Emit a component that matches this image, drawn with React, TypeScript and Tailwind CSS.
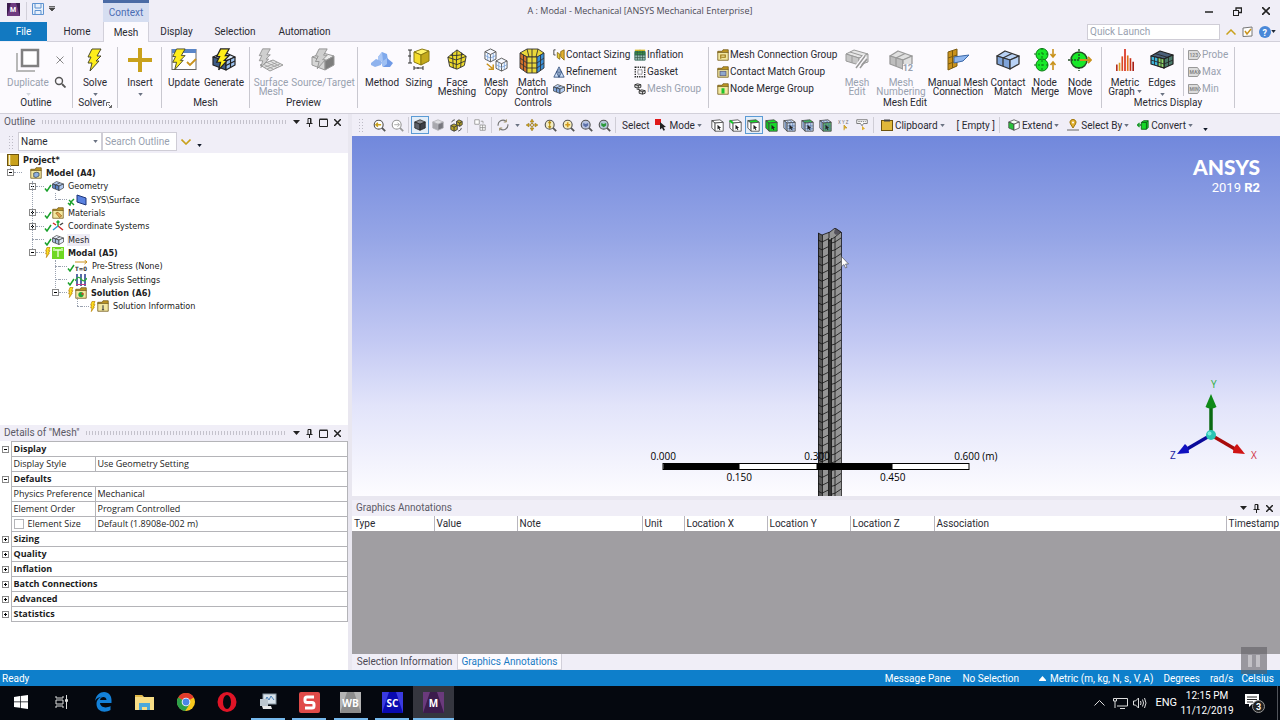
// App.tsx
import type { ReactNode } from 'react';

interface IconProps {
  className?: string;
}

const BOLT = '9,1 18,1 14,8 18,8 13,13 16,13 7,23 9,15 5,15 8,9 5,9';

/* ---------- shared shapes ---------- */

function Caret({ className = 'text-gray-500' }: IconProps) {
  return (
    <svg viewBox="0 0 6 4" className={`w-[5px] h-[3px] shrink-0 ${className}`}>
      <path d="M0 0h6L3 4z" fill="currentColor" />
    </svg>
  );
}

function Bolt({ className = 'w-6 h-6' }: IconProps) {
  return (
    <svg viewBox="0 0 24 24" className={className}>
      <polygon points={BOLT} fill="#ffee1a" stroke="#4a4a2c" strokeWidth="1" />
    </svg>
  );
}

interface CubeProps extends IconProps {
  top?: string;
  left?: string;
  right?: string;
  stroke?: string;
}

function Cube({ className = 'w-3 h-3', top = '#fff', left = '#fff', right = '#fff', stroke = '#444' }: CubeProps) {
  return (
    <svg viewBox="0 0 16 16" className={className}>
      <g stroke={stroke} strokeWidth="1" strokeLinejoin="round">
        <polygon points="1,4 8,1 15,4 8,7" fill={top} />
        <polygon points="1,4 8,7 8,15 1,12" fill={left} />
        <polygon points="15,4 8,7 8,15 15,12" fill={right} />
      </g>
    </svg>
  );
}

// Box seen from the front with a pointer on it, for the selection filters
function PickBox({ top = '#fff', side = '#fff', front = '#fff', corner, grid }: { top?: string; side?: string; front?: string; corner?: boolean; grid?: boolean }) {
  return (
    <svg viewBox="0 0 16 16" className="w-[13px] h-[13px]">
      <g stroke="#444" strokeLinejoin="round">
        <polygon points="1,2 11,1 15,4 5,5" fill={top} />
        <polygon points="1,2 5,5 5,15 1,11" fill={side} />
        <polygon points="5,5 15,4 15,15 5,15" fill={front} />
      </g>
      {grid && <path d="M8.500 5v10M12 4.500V15M5 8.500h10M5 12h10M3 3.500v9M4 1.800L8 4.800M8 1.500L12 4.500" fill="none" stroke="#4a6ca0" strokeWidth=".8" />}
      {corner && <path d="M1 2l4 3" stroke="#17c829" strokeWidth="2.500" />}
      <path d="M8 7l4.500 4-2 .200 1 2-1 .500-1-2L8 13z" fill="#222" />
    </svg>
  );
}

// Two cubes side by side, used for bodies and mesh parts
function Bricks({ className = 'w-6 h-6', a = '#b9d2f5', b = '#7fa3d8', stroke = '#333' }: IconProps & { a?: string; b?: string; stroke?: string }) {
  return (
    <svg viewBox="0 0 24 24" className={className}>
      <g stroke={stroke} strokeWidth="1.3" strokeLinejoin="round">
        <polygon points="1,8 9,3 23,8 14,12" fill={a} />
        <polygon points="1,8 14,12 14,21 1,16" fill={b} />
        <polygon points="23,8 14,12 14,21 23,16" fill={a} />
        <path d="M7 10v8M16 5.500L7 10" fill="none" />
      </g>
    </svg>
  );
}

function Folder({ className = 'w-3 h-3', children }: IconProps & { children?: ReactNode }) {
  return (
    <svg viewBox="0 0 16 16" className={className}>
      <path d="M1 3h6l1-2h7v4H1z" fill="#c39b25" stroke="#6d5410" />
      <path d="M1 4.500h14V15H1z" fill="#f2e7a0" stroke="#6d5410" />
      {children}
    </svg>
  );
}

function Magnifier({ fill = '#fff', stroke = '#555', children }: { fill?: string; stroke?: string; children?: ReactNode }) {
  return (
    <svg viewBox="0 0 16 16" className="w-[13px] h-[13px]">
      <circle cx="7" cy="7" r="5.500" fill={fill} stroke={stroke} strokeWidth="1.400" />
      <path d="M11 11l4 4" stroke={stroke} strokeWidth="2.200" />
      {children}
    </svg>
  );
}

/* ---------- ribbon icons ---------- */

function DuplicateIcon() {
  return (
    <svg viewBox="0 0 24 24" className="w-6 h-6" fill="none">
      <path d="M1 5v18h18" stroke="#b8b8b8" strokeWidth="2" />
      <rect x="6" y="2" width="16" height="16" fill="#fff" stroke="#808080" strokeWidth="2.500" />
    </svg>
  );
}

function InsertIcon() {
  return (
    <svg viewBox="0 0 24 24" className="w-6 h-6">
      <path d="M12 0v24M0 12h24" stroke="#c9a11c" strokeWidth="4" />
    </svg>
  );
}

function UpdateIcon() {
  return (
    <svg viewBox="0 0 26 24" className="w-[26px] h-6">
      <rect x="1" y="1.500" width="24" height="20" fill="#fff" stroke="#666" />
      <rect x="1" y="1" width="24" height="4" fill="#5a86c8" />
      <path d="M16 14l3 3 6-6" fill="none" stroke="#c9921c" strokeWidth="1.800" />
      <polygon points={BOLT} fill="#ffee1a" stroke="#4a4a2c" transform="translate(-3 0) scale(.95)" />
    </svg>
  );
}

function GenerateIcon() {
  return (
    <svg viewBox="0 0 24 24" className="w-6 h-6">
      <g stroke="#222" strokeWidth="1.200" strokeLinejoin="round">
        <polygon points="1,9 12,4 23,9 14,13" fill="#dce9fb" />
        <polygon points="1,9 14,13 14,22 1,17" fill="#3e5c86" />
        <polygon points="23,9 14,13 14,22 23,17" fill="#9cc2ef" />
        <path d="M18.500 11v9M14 17.500l9-4.500" />
      </g>
      <polygon points={BOLT} fill="#ffee1a" stroke="#222" strokeWidth="1.300" transform="scale(.95)" />
    </svg>
  );
}

function SurfaceMeshIcon() {
  return (
    <svg viewBox="0 0 26 24" className="w-[26px] h-6">
      <polygon points="2,17 15,12 25,17 12,23" fill="#e4e4e4" stroke="#999" />
      <path d="M5 16l10 5M9 14.500l10 5M12 13l9 5M6 19.500l13-5M9 21l13-5" stroke="#999" strokeWidth=".8" />
      <polygon points={BOLT} fill="#cfcfcf" stroke="#8f8f8f" transform="translate(-3 0) scale(.85)" />
    </svg>
  );
}

function SourceTargetIcon() {
  return (
    <svg viewBox="0 0 24 24" className="w-6 h-6" stroke="#999">
      <polygon points="1,9 12,5 23,8 14,13" fill="#ececec" />
      <polygon points="1,9 14,13 14,22 1,17" fill="#d6d6d6" />
      <polygon points="23,8 14,13 14,22 23,17" fill="#7d7d7d" />
      <polygon points={BOLT} fill="#cfcfcf" stroke="#8f8f8f" transform="scale(.9)" />
    </svg>
  );
}

function MethodIcon() {
  return (
    <svg viewBox="0 0 24 24" className="w-6 h-6">
      <polygon points="8,9 12,4 17,6 18,13 8,13" fill="#7fa9ec" />
      <polygon points="8,9 12,4 13,13 8,13" fill="#a9c6f5" />
      <polygon points="1,15 6,11 11,13 11,17 5,19 1,17" fill="#8fb3ee" />
      <polygon points="11,14 17,10 23,15 20,19 13,19" fill="#6f9ae6" />
      <polygon points="11,14 17,10 17,16 13,19" fill="#9fc0f4" />
    </svg>
  );
}

function SizingIcon() {
  return (
    <svg viewBox="0 0 24 24" className="w-6 h-6">
      <g stroke="#8a7a12" strokeLinejoin="round">
        <polygon points="7,4 15,1 22,3 14,7" fill="#fff36b" />
        <polygon points="7,4 14,7 14,17 7,14" fill="#f4dc2c" />
        <polygon points="22,3 14,7 14,17 22,13" fill="#c4a91c" />
      </g>
      <path d="M1 2h4M1 15h4M3 2v13M1 8h3M7 18v4M16 18v4M7 20h9M11 19v2" stroke="#333" fill="none" />
    </svg>
  );
}

function FaceMeshingIcon() {
  return (
    <svg viewBox="0 0 24 24" className="w-[22px] h-[22px] mt-px">
      <polygon points="12,1 22,8 20,18 12,22 4,19 2,9" fill="#ecd92a" stroke="#333" />
      <path d="M12 1l-1 21M2 9l9 3 11-4M3 14l9 3 9-4M7 4l1 17M17 4l-1 16M5 7l7 0 7-1" fill="none" stroke="#333" />
    </svg>
  );
}

function MeshCopyIcon() {
  return (
    <svg viewBox="0 0 26 26" className="w-[26px] h-6">
      <g fill="#f4f8ff" stroke="#555" strokeLinejoin="round">
        <path d="M1 4l6-3 6 3v8l-6 3-6-3zM1 4l6 3 6-3M7 7v8" />
        <path d="M13 14l6-3 6 3v8l-6 3-6-3zM13 14l6 3 6-3M19 17v8" />
      </g>
      <path d="M1 8l6 3 6-3M4 5.500v8M10 5.500v8M13 18l6 3 6-3M16 15.500v8M22 15.500v8" fill="none" stroke="#6f9ad6" strokeWidth=".8" />
      <path d="M3 17l6 5M10 18v5H5" fill="none" stroke="#c9921c" strokeWidth="1.600" />
    </svg>
  );
}

function MatchControlIcon() {
  return (
    <svg viewBox="0 0 26 26" className="w-[26px] h-[26px]">
      <g stroke="#333" strokeWidth=".9">
        <path d="M1 5L8 1h11l6 4-6 4H8z" fill="#e9d83a" />
        <path d="M1 5l7 4v16l-7-5z" fill="#d0702a" />
        <path d="M8 9h10v16H8z" fill="#e9d83a" />
        <path d="M25 5l-7 4v16l7-5z" fill="#3a8fd8" />
        <path d="M1 10l7 5h10l7-5M1 15l7 5h10l7-5M4.500 7v15.500M21.500 7v15.500M13 9v16M8 1l2 8M19 1l-2 8M13 1v8" fill="none" />
      </g>
    </svg>
  );
}

function MeshNumberingIcon() {
  return (
    <div className="relative">
      <Bricks a="#e0e0e0" b="#bdbdbd" stroke="#999" />
      <span className="absolute right-0 bottom-0 text-[9px] leading-[8px] font-bold text-gray-400 bg-[#fcfafe]">12</span>
    </div>
  );
}

function MeshEditIcon() {
  return (
    <svg viewBox="0 0 24 24" className="w-6 h-6">
      <g stroke="#999" strokeLinejoin="round">
        <polygon points="1,6 9,2 23,6 14,10" fill="#e6e6e6" />
        <polygon points="1,6 14,10 14,17 1,13" fill="#c6c6c6" />
        <polygon points="23,6 14,10 14,17 23,14" fill="#ddd" />
        <path d="M7 8v7M5 4l13 4v8" fill="none" />
      </g>
      <path d="M11 20L20 8" stroke="#fcfafe" strokeWidth="4" />
      <path d="M11 20L20 8M15 20l7-9" stroke="#999" strokeWidth="1.500" />
    </svg>
  );
}

function ManualMeshIcon() {
  return (
    <svg viewBox="0 0 24 24" className="w-6 h-6">
      <polygon points="2,4 11,1 11,18 2,22" fill="#c9921c" stroke="#7a5a10" />
      <path d="M2 10l9-3M2 16l9-3M6.500 3v17" stroke="#7a5a10" />
      <polygon points="8,9 23,7 17,13 8,15" fill="#8fb6ee" stroke="#3b68a8" />
    </svg>
  );
}

function NodeMergeIcon() {
  return (
    <svg viewBox="0 0 24 24" className="w-6 h-6">
      <circle cx="9" cy="6.500" r="6" fill="#17e829" stroke="#0b7a14" />
      <circle cx="9" cy="17" r="6" fill="#17e829" stroke="#0b7a14" />
      <path d="M1 6h16M1 17h16M9 0v24" stroke="#0b7a14" strokeDasharray="2 2" />
      <path d="M20 1v8M17.500 6l2.500 3 2.500-3M20 22v-8M17.500 17l2.500-3 2.500 3" fill="none" stroke="#c9921c" strokeWidth="1.600" />
    </svg>
  );
}

function NodeMoveIcon() {
  return (
    <svg viewBox="0 0 24 24" className="w-6 h-6">
      <circle cx="11" cy="12" r="8" fill="#17e829" stroke="#224d24" strokeWidth="1.500" />
      <path d="M0 12h11M11 1v4M11 19v4M11 6v6" stroke="#224d24" strokeWidth="1.400" strokeDasharray="2 1" />
      <path d="M12 12h11M20 9l3 3-3 3" fill="none" stroke="#c9921c" strokeWidth="1.800" />
    </svg>
  );
}

function MetricGraphIcon() {
  return (
    <svg viewBox="0 0 22 26" className="w-5 h-6" strokeWidth="1.800">
      <path d="M2 25v-7" stroke="#b53020" />
      <path d="M5 25v-9" stroke="#d8a020" />
      <path d="M8 25V9" stroke="#d84a20" />
      <path d="M11 25V1" stroke="#d82a18" />
      <path d="M14 25V8" stroke="#e07018" />
      <path d="M17 25V11" stroke="#c83018" />
      <path d="M20 25v-10" stroke="#a82018" />
    </svg>
  );
}

function EdgesIcon() {
  return (
    <svg viewBox="0 0 24 24" className="w-6 h-6">
      <g stroke="#222" strokeWidth="1.200" strokeLinejoin="round">
        <polygon points="1,8 10,3 23,7 14,11" fill="#4a5f78" />
        <polygon points="1,8 14,11 14,20 1,16" fill="#3fb4d8" />
        <polygon points="23,7 14,11 14,20 23,16" fill="#4a7a6a" />
        <polygon points="8,9.500 14,11 14,20 8,18" fill="#8fd86a" />
        <path d="M4.500 9v8M11 10v9M18.500 9v9M1 12l13 4 9-4M5 5.500l13 4" fill="none" strokeWidth=".8" />
      </g>
    </svg>
  );
}

function ContactSizingIcon() {
  return (
    <svg viewBox="0 0 14 14" className="w-3 h-3">
      <path d="M3 1H1v6h2" fill="none" stroke="#333" />
      <polygon points="5,4 8,6 8,12 5,10" fill="#e6cf3a" stroke="#8a6a10" />
      <polygon points="9,3 13,1 13,13 9,9" fill="#e0b030" stroke="#8a6a10" />
    </svg>
  );
}

function RefinementIcon() {
  return (
    <svg viewBox="0 0 14 14" className="w-3 h-3" fill="#cfe0f8" stroke="#34507c">
      <path d="M7 1l6 12H1zM4 7h6l-3 6zM7 7v6M4 7l3-3 3 3" />
    </svg>
  );
}

function InflationIcon() {
  return (
    <svg viewBox="0 0 14 14" className="w-3 h-3">
      <path d="M1 3q6-3 12 0v4H1z" fill="#3c9a48" stroke="#265" />
      <path d="M1 7h12v6H1z" fill="#9cc0b8" stroke="#365" />
      <path d="M1 5q6-3 12 0M4 2v11M7 2v11M10 2v11M1 10h12" fill="none" stroke="#354" strokeWidth=".8" />
      <path d="M1 1.500h12" stroke="#d8b820" strokeWidth="1.500" />
    </svg>
  );
}

function GasketIcon() {
  return (
    <svg viewBox="0 0 14 14" className="w-3 h-3" fill="none" stroke="#222">
      <rect x="1.500" y="1.500" width="11" height="11" strokeWidth="1.600" strokeDasharray="1.500 1.200" />
      <rect x="4.500" y="4.500" width="5" height="5" strokeDasharray="1 1" />
    </svg>
  );
}

function MeshGroupIcon() {
  return (
    <svg viewBox="0 0 14 14" className="w-3 h-3" fill="#ddd" stroke="#222">
      <path d="M1 2l3-1 4 1v3L5 6 1 5zM1 2l4 1 3-1M5 3v3" />
      <path d="M6 9l3-1 4 1v3l-3 1-4-1zM6 9l4 1 3-1M10 10v3M3 7l4 1" />
    </svg>
  );
}

function TagIcon({ text }: { text: string }) {
  return (
    <svg viewBox="0 0 13 10" className="w-[13px] h-[10px]">
      <path d="M.500 .500h9l3 4.500-3 4.500h-9z" fill="#dcdcdc" stroke="#999" />
      <text x="1.500" y="7" fontSize="5" fontWeight="700" fill="#888">{text}</text>
    </svg>
  );
}

/* ---------- ribbon building blocks ---------- */

interface BigButtonProps {
  width: string;
  icon: ReactNode;
  lines: string[];
  disabled?: boolean;
  caret?: boolean;
}

function BigButton({ width, icon, lines, disabled, caret }: BigButtonProps) {
  return (
    <button
      type="button"
      disabled={disabled}
      className={`${width} shrink-0 flex flex-col items-center text-[10px] leading-[9px] whitespace-nowrap ${disabled ? 'text-gray-400' : 'text-[#2a2a32]'}`}
    >
      <span className="h-[30px] flex items-start justify-center">{icon}</span>
      {lines.map((line, i) => (
        <span key={line} className="flex items-center gap-0.5">
          {line}
          {caret && lines.length > 1 && i === lines.length - 1 && <Caret />}
        </span>
      ))}
      {caret && lines.length === 1 && <Caret className={disabled ? 'mt-1.5 text-gray-300' : 'mt-1.5 text-gray-500'} />}
    </button>
  );
}

interface SmallItem {
  icon: ReactNode;
  label: string;
  disabled?: boolean;
}

function SmallColumn({ width, items }: { width: string; items: SmallItem[] }) {
  return (
    <div className={`${width} shrink-0 flex flex-col gap-1`}>
      {items.map((item) => (
        <button
          key={item.label}
          type="button"
          disabled={item.disabled}
          className={`h-[13px] flex items-center gap-px text-[10px] leading-[13px] whitespace-nowrap ${item.disabled ? 'text-gray-400' : 'text-[#2a2a32]'}`}
        >
          {item.icon}
          {item.label}
        </button>
      ))}
    </div>
  );
}

function Group({ width, label, pad = '', children, launcher }: { width: string; label?: string; pad?: string; children: ReactNode; launcher?: boolean }) {
  return (
    <section className={`${width} shrink-0 h-[61px] flex flex-col justify-between border-r border-[#c9c8d0]`}>
      <div className={`flex pt-px ${pad}`}>{children}</div>
      <div className="h-[11px] flex items-center justify-center text-[10px] leading-[11px] text-[#2a2a32]">
        {label}
        {launcher && (
          <svg viewBox="0 0 6 6" className="w-[6px] h-[6px] mt-1 shrink-0">
            <path d="M.5 4V.500H4M2.500 2.500l3 3M5.500 3v2.500H3" fill="none" stroke="#666" />
          </svg>
        )}
      </div>
    </section>
  );
}

function Ribbon() {
  return (
    <div className="h-[72px] flex pt-[5px] bg-[#fcfafe] border-b border-[#d2d0da] overflow-hidden">
      <Group width="w-[73px]" label="Outline" pad="px-1">
        <BigButton width="w-12" icon={<DuplicateIcon />} lines={['Duplicate']} disabled caret />
        <div className="w-4 flex flex-col items-center gap-3 pt-2">
          <button type="button" disabled aria-label="Delete">
            <svg viewBox="0 0 8 8" className="w-2 h-2"><path d="M.5 .5l7 7M7.500 .5l-7 7" stroke="#888" /></svg>
          </button>
          <button type="button" aria-label="Find">
            <svg viewBox="0 0 12 12" className="w-3 h-3" fill="none" stroke="#555">
              <circle cx="5" cy="5" r="3.500" strokeWidth="1.400" />
              <path d="M8 8l3.500 3.500" strokeWidth="1.800" />
            </svg>
          </button>
        </div>
      </Group>
      <Group width="w-[45px]" label="Solver" launcher>
        <BigButton width="w-11" icon={<Bolt />} lines={['Solve']} caret />
      </Group>
      <Group width="w-11">
        <BigButton width="w-11" icon={<InsertIcon />} lines={['Insert']} caret />
      </Group>
      <Group width="w-[88px]" label="Mesh" pad="pl-0.5">
        <BigButton width="w-10" icon={<UpdateIcon />} lines={['Update']} />
        <BigButton width="w-10" icon={<GenerateIcon />} lines={['Generate']} />
      </Group>
      <Group width="w-[108px]" label="Preview" pad="pl-0.5">
        <BigButton width="w-[38px]" icon={<SurfaceMeshIcon />} lines={['Surface', 'Mesh']} disabled />
        <BigButton width="w-[66px]" icon={<SourceTargetIcon />} lines={['Source/Target']} disabled />
      </Group>
      <Group width="w-[351px]" label="Controls" pad="pl-1">
        <BigButton width="w-10" icon={<MethodIcon />} lines={['Method']} />
        <BigButton width="w-[34px]" icon={<SizingIcon />} lines={['Sizing']} />
        <BigButton width="w-[42px]" icon={<FaceMeshingIcon />} lines={['Face', 'Meshing']} />
        <BigButton width="w-9" icon={<MeshCopyIcon />} lines={['Mesh', 'Copy']} />
        <BigButton width="w-9" icon={<MatchControlIcon />} lines={['Match', 'Control']} />
        <span className="w-[3px]" />
        <SmallColumn
          width="w-[81px]"
          items={[
            { icon: <ContactSizingIcon />, label: 'Contact Sizing' },
            { icon: <RefinementIcon />, label: 'Refinement' },
            { icon: <Bricks className="w-3 h-3" />, label: 'Pinch' },
          ]}
        />
        <SmallColumn
          width="w-[72px]"
          items={[
            { icon: <InflationIcon />, label: 'Inflation' },
            { icon: <GasketIcon />, label: 'Gasket' },
            { icon: <MeshGroupIcon />, label: 'Mesh Group', disabled: true },
          ]}
        />
      </Group>
      <Group width="w-[393px]" label="Mesh Edit" pad="pl-2">
        <SmallColumn
          width="w-[122px]"
          items={[
            { icon: <Folder><path d="M5 13V8h6v3H6" fill="none" stroke="#9a7510" strokeWidth="1.500" /></Folder>, label: 'Mesh Connection Group' },
            { icon: <Folder><rect x="4" y="7" width="8" height="6" fill="#8fa8cc" stroke="#557" /></Folder>, label: 'Contact Match Group' },
            { icon: <Folder><rect x="6" y="7" width="4" height="7" fill="#1fc42e" /></Folder>, label: 'Node Merge Group' },
          ]}
        />
        <BigButton width="w-9" icon={<MeshEditIcon />} lines={['Mesh', 'Edit']} disabled />
        <BigButton width="w-[52px]" icon={<MeshNumberingIcon />} lines={['Mesh', 'Numbering']} disabled />
        <BigButton width="w-[62px]" icon={<ManualMeshIcon />} lines={['Manual Mesh', 'Connection']} />
        <BigButton width="w-[38px]" icon={<Bricks />} lines={['Contact', 'Match']} />
        <BigButton width="w-9" icon={<NodeMergeIcon />} lines={['Node', 'Merge']} />
        <BigButton width="w-[34px]" icon={<NodeMoveIcon />} lines={['Node', 'Move']} />
      </Group>
      <Group width="w-[133px]" label="Metrics Display" pad="pl-1">
        <BigButton width="w-[38px]" icon={<MetricGraphIcon />} lines={['Metric', 'Graph']} caret />
        <BigButton width="w-9" icon={<EdgesIcon />} lines={['Edges']} caret />
        <div className="ml-[3px] pl-1 border-l border-[#c9c8d0]">
          <SmallColumn
            width="w-11"
            items={[
              { icon: <TagIcon text="123" />, label: 'Probe', disabled: true },
              { icon: <TagIcon text="MAX" />, label: 'Max', disabled: true },
              { icon: <TagIcon text="MIN" />, label: 'Min', disabled: true },
            ]}
          />
        </div>
      </Group>
    </div>
  );
}

/* ---------- title and tabs ---------- */

function TitleBar() {
  return (
    <header className="h-[22px] grid grid-cols-[1fr_auto_1fr] items-center bg-[#f0eef7]">
      <div className="flex items-center h-[22px]">
        <svg viewBox="0 0 13 13" className="w-[13px] h-[13px] ml-[7px] mb-1">
          <rect width="13" height="13" fill="#3d1d4f" />
          <path d="M4 0h5l4 13H0z" fill="#6d3a80" />
          <text x="3" y="9" fontSize="7" fontWeight="700" fill="#fff">M</text>
        </svg>
        <span className="w-px h-[18px] ml-1.5 bg-[#d2d0da]" />
        <button type="button" aria-label="Save" className="ml-[5px] mb-1">
          <svg viewBox="0 0 12 12" className="w-3 h-3" fill="#e8f0fb" stroke="#5f93d0">
            <path d="M.5 .5h11v11H.5zM3 .500h6v4.500H3zM3 7.500h6v4H3z" />
          </svg>
        </button>
        <svg viewBox="0 0 6 6" className="w-[6px] h-[6px] ml-[5px] mb-1"><path d="M0 .500h6M0 2h6L3 5z" fill="#444" stroke="#444" strokeWidth=".8" /></svg>
        <div className="w-[46px] h-[22px] ml-12 flex items-center justify-center border-t-[3px] border-[#4a6ba5] bg-[#d6def1] text-[10px] text-[#4a6cb3]">
          Context
        </div>
      </div>
      <h1 className="font-['Open_Sans',sans-serif] text-[9px] text-[#4c4a55]">A : Modal - Mechanical [ANSYS Mechanical Enterprise]</h1>
      <div className="flex items-center justify-end gap-5 pr-2.5 text-[#222]">
        <button type="button" aria-label="Minimize">
          <svg viewBox="0 0 8 8" className="w-2 h-2"><path d="M0 5h8" stroke="currentColor" strokeWidth="1.500" /></svg>
        </button>
        <button type="button" aria-label="Restore">
          <svg viewBox="0 0 9 9" className="w-[9px] h-[9px]" fill="none" stroke="currentColor">
            <path d="M3 3V1h5.500v4.500H6" strokeWidth="1.300" />
            <rect x=".5" y="3.500" width="5" height="5" />
          </svg>
        </button>
        <button type="button" aria-label="Close">
          <svg viewBox="0 0 8 8" className="w-2 h-2"><path d="M0 0l8 8M8 0L0 8" stroke="currentColor" strokeWidth="1.600" /></svg>
        </button>
      </div>
    </header>
  );
}

function TabStrip() {
  return (
    <nav className="h-5 flex bg-[#f0eef7] text-[10px] text-[#2a2a32]">
      <button type="button" className="w-[47px] h-[19px] bg-[#1279c1] text-white">File</button>
      <div className="flex-1 flex border-b border-[#d2d0da]">
        <button type="button" className="w-14 pl-1">Home</button>
        <button type="button" className="w-[46px] h-5 shrink-0 bg-[#fcfafe] border-x border-[#d2d0da]">Mesh</button>
        <button type="button" className="w-[55px]">Display</button>
        <button type="button" className="w-[62px]">Selection</button>
        <button type="button" className="w-[77px]">Automation</button>
        <div className="flex-1 flex items-center justify-end gap-1.5 pr-1">
          <input
            aria-label="Quick Launch"
            placeholder="Quick Launch"
            className="w-[133px] h-4 px-0.5 bg-white border border-[#cfcdd6] placeholder-gray-400"
          />
          <svg viewBox="0 0 10 6" className="w-[10px] h-[6px]"><path d="M.5 5.500L5 1l4.500 4.500" fill="none" stroke="#c9a11c" strokeWidth="1.500" /></svg>
          <svg viewBox="0 0 11 11" className="w-[11px] h-[11px]">
            <path d="M1 2l9-1v9l-9 .500z" fill="#fff" stroke="#777" />
            <path d="M3 5l2 3 4-5" fill="none" stroke="#c9921c" strokeWidth="1.500" />
          </svg>
          <button type="button" aria-label="Help" className="flex items-center">
            <svg viewBox="0 0 12 12" className="w-3 h-3">
              <circle cx="6" cy="6" r="6" fill="#4a88d8" />
              <text x="3.500" y="9.500" fontSize="9" fontWeight="700" fill="#fff">?</text>
            </svg>
            <Caret className="text-gray-800" />
          </button>
        </div>
      </div>
    </nav>
  );
}

/* ---------- docked panel header ---------- */

function PanelHeader({ title, maximize = true, dots = true }: { title: string; maximize?: boolean; dots?: boolean }) {
  return (
    <div className="h-4 shrink-0 flex items-center gap-1.5 pl-1 pr-[7px] bg-[#f0eef7] text-[10px] leading-[14px] text-[#5c5a66]">
      <h2>{title}</h2>
      {dots ? (
        <span className="flex-1 h-1 bg-[radial-gradient(#c4c2cc_1px,transparent_1px)] bg-[size:3px_2px]" />
      ) : (
        <span className="flex-1" />
      )}
      <button type="button" aria-label="Panel menu">
        <svg viewBox="0 0 7 4" className="w-[7px] h-1"><path d="M0 0h7L3.500 4z" fill="#222" /></svg>
      </button>
      <button type="button" aria-label="Pin">
        <svg viewBox="0 0 7 9" className="w-[7px] h-[9px]" fill="none" stroke="#222"><path d="M2 5V.500h3V5M.5 5.500h6M3.500 5.500V9M4.500 1v4" /></svg>
      </button>
      {maximize && (
        <button type="button" aria-label="Maximize">
          <svg viewBox="0 0 9 9" className="w-[9px] h-[9px]" fill="none" stroke="#222"><path d="M.5 1.500h8v7h-8zM.5 1h8" /></svg>
        </button>
      )}
      <button type="button" aria-label="Close panel">
        <svg viewBox="0 0 7 7" className="w-[7px] h-[7px]"><path d="M0 0l7 7M7 0L0 7" stroke="#222" strokeWidth="1.500" /></svg>
      </button>
    </div>
  );
}

function Grip() {
  return <span className="w-[5px] h-3.5 shrink-0 bg-[radial-gradient(#bdbbc6_1px,transparent_1px)] bg-[size:3px_3px]" />;
}

/* ---------- outline tree ---------- */

function Toggle({ open }: { open: boolean }) {
  return (
    <svg viewBox="0 0 7 7" className="w-[7px] h-[7px] shrink-0">
      <rect x=".5" y=".5" width="6" height="6" fill="#fff" stroke="#888" />
      <path d={open ? 'M2 3.500h3' : 'M2 3.500h3M3.500 2v3'} stroke="#000" />
    </svg>
  );
}

function StateMark({ kind }: { kind: string }) {
  if (kind === 'bolt') {
    return (
      <svg viewBox="0 0 24 24" className="w-2 h-[11px] shrink-0" preserveAspectRatio="none">
        <polygon points={BOLT} fill="#ffe11a" stroke="#c08a10" strokeWidth="2" />
      </svg>
    );
  }
  if (kind === 'cross') {
    return (
      <svg viewBox="0 0 8 8" className="w-2 h-2 mt-1 shrink-0"><path d="M1 5l2 2 1-3 3-3M2 2l5 5" fill="none" stroke="#19a02a" strokeWidth="1.400" /></svg>
    );
  }
  return (
    <svg viewBox="0 0 8 8" className="w-2 h-2 mt-1 shrink-0"><path d="M1 4.500l2 2.500 4-6" fill="none" stroke="#19a02a" strokeWidth="1.500" /></svg>
  );
}

const treeIcons: Record<string, ReactNode> = {
  project: (
    <svg viewBox="0 0 12 12" className="w-3 h-3"><rect x=".5" y=".5" width="11" height="11" fill="#c9a11c" stroke="#6d5410" /><path d="M2.500 1v10" stroke="#fbf4d0" strokeWidth="1.500" /></svg>
  ),
  model: <Folder><path d="M5 8l4-1 3 1v4l-4 2-3-1z" fill="#8fb0e0" stroke="#345" /></Folder>,
  geometry: <Bricks className="w-3 h-3" a="#b0c8ee" b="#5d85c4" />,
  surface: (
    <svg viewBox="0 0 12 12" className="w-3 h-3"><polygon points="2,1 11,4 11,11 2,8" fill="#5a82e0" stroke="#1c3478" /></svg>
  ),
  materials: <Folder><path d="M5 8l3-1 5 5-3 2z" fill="#e6a85a" stroke="#946014" /></Folder>,
  coords: (
    <svg viewBox="0 0 12 12" className="w-3 h-3" strokeWidth="1.500">
      <path d="M6 6V1M4.500 2.500L6 1l1.500 1.500" fill="none" stroke="#1fae35" />
      <path d="M6 6l5 4M1 3l3 2" stroke="#d02a2a" />
      <path d="M6 6l-5 4" stroke="#2a9ad0" />
      <path d="M8 5l3-2" stroke="#444" />
    </svg>
  ),
  mesh: <Bricks className="w-3 h-3" a="#e4ecf8" b="#a8bede" />,
  modal: (
    <svg viewBox="0 0 12 12" className="w-3 h-3"><rect width="12" height="12" fill="#6fd820" /><path d="M3 3h6M6 3v7M2 1v3M10 1v3" stroke="#eaffd8" strokeWidth="1.300" /></svg>
  ),
  prestress: (
    <svg viewBox="0 0 13 12" className="w-[13px] h-3"><path d="M0 2h12M9.500 0L12 2 9.500 4" fill="none" stroke="#c9921c" /><text x="0" y="11" fontSize="6" fontWeight="700" fill="#333">T=0</text></svg>
  ),
  settings: (
    <svg viewBox="0 0 12 12" className="w-3 h-3" fill="none"><path d="M2 0v12M6 0v12M10 0v12" stroke="#223a8a" strokeWidth="1.500" /><path d="M0 7q3-6 6-2t6-1" stroke="#2aae3a" strokeWidth="1.300" /><path d="M1 10.500h10" stroke="#c03a8a" /></svg>
  ),
  solution: <Folder><circle cx="8" cy="10" r="3.500" fill="#1fa83a" /><circle cx="10" cy="9" r="1.500" fill="#d8402a" /></Folder>,
  info: <Folder><path d="M8 7v6M6.500 13h3" stroke="#444" strokeWidth="1.500" /></Folder>,
};

interface TreeNode {
  label: string;
  icon: string;
  indent: string;
  toggle?: boolean;
  mark?: string;
  bold?: boolean;
  selected?: boolean;
  lead?: boolean;
}

const treeNodes: TreeNode[] = [
  { label: 'Project*', icon: 'project', indent: 'pl-[7px]', bold: true },
  { label: 'Model (A4)', icon: 'model', indent: 'pl-[7px]', toggle: true, bold: true },
  { label: 'Geometry', icon: 'geometry', indent: 'pl-[29px]', toggle: true, mark: 'check' },
  { label: 'SYS\\Surface', icon: 'surface', indent: 'pl-[52px]', mark: 'cross', lead: true },
  { label: 'Materials', icon: 'materials', indent: 'pl-[29px]', toggle: false, mark: 'check' },
  { label: 'Coordinate Systems', icon: 'coords', indent: 'pl-[29px]', toggle: false, mark: 'check' },
  { label: 'Mesh', icon: 'mesh', indent: 'pl-[29px]', mark: 'check', selected: true, lead: true },
  { label: 'Modal (A5)', icon: 'modal', indent: 'pl-[29px]', toggle: true, mark: 'bolt', bold: true },
  { label: 'Pre-Stress (None)', icon: 'prestress', indent: 'pl-[52px]', mark: 'check', lead: true },
  { label: 'Analysis Settings', icon: 'settings', indent: 'pl-[52px]', mark: 'check', lead: true },
  { label: 'Solution (A6)', icon: 'solution', indent: 'pl-[52px]', toggle: true, mark: 'bolt', bold: true },
  { label: 'Solution Information', icon: 'info', indent: 'pl-[74px]', mark: 'bolt', lead: true },
];

function OutlinePanel() {
  return (
    <section className="flex-1 min-h-0 flex flex-col bg-white">
      <PanelHeader title="Outline" />
      <div className="h-[23px] shrink-0 flex items-center pl-2 bg-[#f0eef7] text-[10px]">
        <Grip />
        <div className="relative ml-[5px]">
          <select aria-label="Filter by" className="w-[84px] h-[19px] pl-0.5 appearance-none bg-white border border-[#cfcdd6] text-[#2a2a32]">
            <option>Name</option>
          </select>
          <span className="absolute right-1 top-2"><Caret /></span>
        </div>
        <input
          aria-label="Search Outline"
          placeholder="Search Outline"
          className="w-[75px] h-[19px] px-0.5 bg-white border border-[#cfcdd6] placeholder-gray-400"
        />
        <svg viewBox="0 0 10 6" className="w-[10px] h-[6px] ml-1"><path d="M.5 .5L5 5l4.500-4.500" fill="none" stroke="#c9a11c" strokeWidth="1.600" /></svg>
        <Caret className="ml-1.5 mt-2 text-gray-900" />
      </div>
      <ul className="relative h-40 grid auto-rows-fr font-['DejaVu_Sans_Condensed','DejaVu_Sans',sans-serif] text-[9px] text-[#222]">
        {/* vertical connectors */}
        <li aria-hidden="true" className="absolute left-[10px] top-3 h-1 border-l border-dotted border-gray-400" />
        <li aria-hidden="true" className="absolute left-[32px] top-7 h-[68px] border-l border-dotted border-gray-400" />
        <li aria-hidden="true" className="absolute left-[55px] top-10 h-[7px] border-l border-dotted border-gray-400" />
        <li aria-hidden="true" className="absolute left-[55px] top-[107px] h-7 border-l border-dotted border-gray-400" />
        <li aria-hidden="true" className="absolute left-[77px] top-36 h-[9px] border-l border-dotted border-gray-400" />
        {treeNodes.map((node) => (
          <li key={node.label} className={`flex items-center ${node.indent}`}>
            {node.toggle !== undefined && <Toggle open={node.toggle} />}
            {node.lead && <span className="w-[7px] flex justify-end"><span className="w-1 border-t border-dotted border-gray-400" /></span>}
            {node.icon !== 'project' && <span className="w-2 border-t border-dotted border-gray-400" />}
            {node.mark && <StateMark kind={node.mark} />}
            <span className={`flex ${node.icon === 'model' ? 'ml-2' : ''}`}>{treeIcons[node.icon]}</span>
            <button
              type="button"
              className={`ml-[3px] px-px leading-[12px] whitespace-nowrap ${node.bold ? 'font-bold' : ''} ${node.selected ? 'bg-[#eeecf4]' : ''}`}
            >
              {node.label}
            </button>
          </li>
        ))}
      </ul>
    </section>
  );
}

/* ---------- details table ---------- */

interface DetailRow {
  name: string;
  value?: string;
  open?: boolean;
  check?: boolean;
}

const detailRows: DetailRow[] = [
  { name: 'Display', open: true },
  { name: 'Display Style', value: 'Use Geometry Setting' },
  { name: 'Defaults', open: true },
  { name: 'Physics Preference', value: 'Mechanical' },
  { name: 'Element Order', value: 'Program Controlled' },
  { name: 'Element Size', value: 'Default (1.8908e-002 m)', check: true },
  { name: 'Sizing', open: false },
  { name: 'Quality', open: false },
  { name: 'Inflation', open: false },
  { name: 'Batch Connections', open: false },
  { name: 'Advanced', open: false },
  { name: 'Statistics', open: false },
];

function DetailsPanel() {
  return (
    <section className="h-[245px] shrink-0 bg-white">
      <PanelHeader title={'Details of "Mesh"'} />
      <table className="w-full table-fixed border-collapse font-['Open_Sans',sans-serif] text-[9px] leading-[14px] text-[#1c1c22]">
        <colgroup>
          <col className="w-[11px]" />
          <col className="w-[84px]" />
          <col />
        </colgroup>
        <tbody>
          {detailRows.map((row) => (
            <tr key={row.name} className="h-[15px]">
              <td className="p-0 border-r border-[#b4b4b8]">
                {row.open !== undefined && <span className="flex pl-0.5"><Toggle open={row.open} /></span>}
              </td>
              {row.value ? (
                <>
                  <td className="p-0 pl-0.5 border border-[#b4b4b8] whitespace-nowrap">
                    {row.check ? (
                      <label className="flex items-center gap-1">
                        <input type="checkbox" className="w-[10px] h-[10px] appearance-none bg-white border border-[#b4b4b8]" />
                        {row.name}
                      </label>
                    ) : row.name}
                  </td>
                  <td className="p-0 pl-0.5 border border-[#b4b4b8]">{row.value}</td>
                </>
              ) : (
                <th colSpan={2} scope="rowgroup" className="p-0 pl-0.5 text-left font-bold border border-[#b4b4b8]">{row.name}</th>
              )}
            </tr>
          ))}
        </tbody>
      </table>
    </section>
  );
}

/* ---------- graphics toolbar ---------- */

function Tool({ label, active, children }: { label: string; active?: boolean; children: ReactNode }) {
  return (
    <button
      type="button"
      aria-label={label}
      className={`w-[18px] h-[18px] shrink-0 flex items-center justify-center border ${active ? 'border-[#5b9bd5] bg-[#e3edf8]' : 'border-transparent'}`}
    >
      {children}
    </button>
  );
}

function Divider() {
  return <span className="w-px h-4 mx-0.5 shrink-0 bg-[#cfcdd6]" />;
}

function TextTool({ icon, label }: { icon?: ReactNode; label: string }) {
  return (
    <button type="button" className="shrink-0 flex items-center gap-0.5 whitespace-nowrap">
      {icon}
      {label}
      <Caret />
    </button>
  );
}

function GraphicsToolbar() {
  return (
    <div className="h-[22px] shrink-0 flex items-center pl-1.5 bg-[#f0eef7] text-[10px] text-[#2a2a32] overflow-hidden">
      <Grip />
      <span className="w-[7px]" />
      <Tool label="Zoom back"><Magnifier><path d="M10 7H4M6 4.500L3.500 7 6 9.500" fill="none" stroke="#c9a11c" strokeWidth="1.800" /></Magnifier></Tool>
      <Tool label="Zoom forward"><Magnifier stroke="#999"><path d="M4 7h6M8 4.500L10.500 7 8 9.500" fill="none" stroke="#aaa" strokeWidth="1.200" /></Magnifier></Tool>
      <Divider />
      <Tool label="Shaded with edges" active><Cube top="#8a8d94" left="#5c6068" right="#3d4048" stroke="#222" /></Tool>
      <Tool label="Shaded"><Cube top="#dedee2" left="#a8a8ae" right="#77777e" stroke="#b0b0b6" /></Tool>
      <Tool label="Display parts">
        <svg viewBox="0 0 16 16" className="w-[13px] h-[13px]" stroke="#333">
          <path d="M1 8l4-2 4 2v5l-4 2-4-2z" fill="#b8a52a" />
          <path d="M8 3l3-2 4 2v4l-3 2-4-2z" fill="#b8a52a" />
          <path d="M1 8l4 2 4-2M5 10v5M8 3l4 2 3-2M12 5v4M2 4q1-3 4-3M14 11q0 3-4 4" fill="none" />
        </svg>
      </Tool>
      <Divider />
      <span className="w-px" />
      <Tool label="Exploded view">
        <svg viewBox="0 0 16 16" className="w-3 h-3" fill="#fff" stroke="#888">
          <path d="M1 1h6v6H1zM8 8h7v7H8zM8 11.500h7M11.500 8v7M9 3h3v3" />
        </svg>
      </Tool>
      <Divider />
      <Tool label="Rotate">
        <svg viewBox="0 0 16 16" className="w-3 h-3" fill="none" stroke="#777" strokeWidth="1.500">
          <path d="M1.500 9A6.500 6.500 0 0 1 12 3M14.500 7A6.500 6.500 0 0 1 4 13" />
          <path d="M12.500 .500V4H9M3.500 15.500V12H7" stroke="#9a8a5a" strokeWidth="1.200" />
        </svg>
      </Tool>
      <span className="w-[11px] flex justify-center"><Caret /></span>
      <Tool label="Pan">
        <svg viewBox="0 0 16 16" className="w-3 h-3" fill="#d0a41c" stroke="#7a5a10" strokeWidth=".5">
          <path d="M8 0l2.500 4h-5zM8 16l2.500-4h-5zM0 8l4-2.500v5zM16 8l-4-2.500v5z" />
          <path d="M7 5h2v1.500H7zM7 9.500h2V11H7zM5 7h1.500v2H5zM9.500 7H11v2H9.500z" />
        </svg>
      </Tool>
      <Tool label="Zoom"><Magnifier fill="#f4ecc0"><path d="M7 3v8M5.500 5L7 3l1.500 2M5.500 9L7 11l1.500-2" fill="none" stroke="#b08a10" strokeWidth="1.300" /></Magnifier></Tool>
      <Tool label="Box zoom"><Magnifier fill="#f8edb8"><path d="M7 4v6M4 7h6" stroke="#d09a1c" strokeWidth="2" /></Magnifier></Tool>
      <Tool label="Fit"><Magnifier fill="#b8c4e0"><path d="M4 5l3 1 3-1v3L7 10 4 8z" fill="#5a6fa8" /></Magnifier></Tool>
      <Tool label="Magnify"><Magnifier fill="#b4c8d8"><path d="M4 5l3 1 3-1v3L7 10 4 8z" fill="#2a9a3a" /></Magnifier></Tool>
      <Divider />
      <span className="ml-1 shrink-0">Select</span>
      <span className="w-1.5" />
      <TextTool
        icon={<svg viewBox="0 0 12 12" className="w-3 h-3"><rect width="6" height="6" fill="#e01818" /><path d="M5 3l6 5-2.500.300L10 11l-1.500.800L7 9 5 10.500z" fill="#222" /></svg>}
        label="Mode"
      />
      <span className="w-[7px]" />
      <Tool label="Vertex"><PickBox /></Tool>
      <Tool label="Edge"><PickBox corner /></Tool>
      <Tool label="Face" active><PickBox top="#17d829" /></Tool>
      <Tool label="Body"><PickBox top="#17e829" side="#14c224" front="#17d829" /></Tool>
      <Tool label="Node"><PickBox top="#dce6f6" side="#c4d4ec" front="#c4d4ec" grid /></Tool>
      <Tool label="Element face"><PickBox top="#3ac04a" side="#c4d4ec" front="#c4d4ec" grid /></Tool>
      <Tool label="Element"><PickBox top="#c4d4ec" side="#c4d4ec" front="#5ab06a" grid /></Tool>
      <Tool label="Coordinate">
        <svg viewBox="0 0 16 16" className="w-3 h-3"><text x="0" y="6" fontSize="6" fill="#777">X Y Z</text><path d="M8 15V8l4 4H9.500" fill="#e0b030" stroke="#c09820" /></svg>
      </Tool>
      <Tool label="Label">
        <svg viewBox="0 0 16 16" className="w-3 h-3"><path d="M1 1h14v5H10L8 9 6 6H1z" fill="#fff" stroke="#555" /><path d="M3 3.500h10" stroke="#555" strokeDasharray="2 1" /><path d="M8 15V9l4 4z" fill="#e0b030" /></svg>
      </Tool>
      <Divider />
      <span className="w-[5px]" />
      <TextTool
        icon={<svg viewBox="0 0 12 12" className="w-3 h-3"><rect x=".5" y="1.500" width="11" height="10" fill="#e0b83a" stroke="#6d5410" /><path d="M3 1.500h6" stroke="#444" strokeWidth="2" /></svg>}
        label="Clipboard"
      />
      <span className="ml-3 mr-0.5 shrink-0">[ Empty ]</span>
      <Divider />
      <span className="w-1.5" />
      <TextTool icon={<Cube left="#2ac43a" top="#f4fff4" />} label="Extend" />
      <span className="w-2" />
      <TextTool
        icon={<svg viewBox="0 0 12 12" className="w-3 h-3"><path d="M0 11h12" stroke="#666" /><path d="M6 9L3.500 5a3 3 0 1 1 5 0z" fill="#e0b030" stroke="#a07810" /><circle cx="6" cy="3.500" r="1" fill="#fff" /></svg>}
        label="Select By"
      />
      <span className="w-2" />
      <TextTool
        icon={<svg viewBox="0 0 14 12" className="w-3 h-3"><path d="M0 6h5M3 3.500L.500 6 3 8.500" fill="none" stroke="#1a9a2a" strokeWidth="1.500" /><path d="M5 3l3-2h5v8l-2 2H5z" fill="#17d829" stroke="#0b5a14" /><path d="M5 3h6v8M11 3l2-2" fill="none" stroke="#0b5a14" /></svg>}
        label="Convert"
      />
      <Caret className="ml-2.5 mt-2 text-gray-900" />
    </div>
  );
}

/* ---------- viewport ---------- */

const beamSteps = Array.from({ length: 34 }, (_, i) => i);

function Beam() {
  return (
    <svg viewBox="0 0 24 268" className="absolute left-1/2 bottom-0 ml-0.5 w-6 h-[268px]">
      <polygon points="0,5 4,7 12,4 17,0 23,4 23,268 0,268" fill="#959595" />
      <polygon points="0,5 4,7 4,268 0,268" fill="#585858" />
      <polygon points="17,0 23,4 18,7 16,5" fill="#55525c" />
      <polygon points="10.500,11 13.500,12 13.500,268 10.500,268" fill="#333" />
      <g stroke="#111" strokeWidth=".8" fill="none">
        {beamSteps.map((i) => (
          <path key={i} d={`M0 ${12 + i * 7.85}l4 2 6-3M13.500 ${15 + i * 7.85}l3.500-1 6-4`} />
        ))}
        <path d="M.500 5v263M4.500 7v261M10.500 10v258M13.500 10v258M17 9v259M23.500 4v264M0 5l4 2 8-3 5-4 6 4-6 5-6 4M11 4v6" />
      </g>
    </svg>
  );
}

function ScaleBar() {
  return (
    <div className="absolute left-1/2 bottom-[13px] w-[307px] -translate-x-1/2 font-['Open_Sans',sans-serif] text-[10px] leading-[12px] text-black">
      <div className="flex justify-between -mx-3">
        <span>0.000</span>
        <span className="ml-1">0.300</span>
        <span className="-mr-4">0.600 (m)</span>
      </div>
      <div className="h-[7px] mt-px flex border border-black bg-white">
        <span className="flex-1 bg-black" />
        <span className="flex-1" />
        <span className="flex-1 bg-black" />
        <span className="flex-1" />
      </div>
      <div className="flex justify-around mt-px">
        <span>0.150</span>
        <span>0.450</span>
      </div>
    </div>
  );
}

function Triad() {
  return (
    <svg viewBox="0 0 92 86" className="absolute right-[19px] bottom-[34px] w-[92px] h-[86px] font-['Open_Sans',sans-serif] text-[10px]">
      <path d="M42 59V28" stroke="#0b6a12" strokeWidth="3.500" />
      <path d="M42 18l5.500 13q-5.500 3-11 0z" fill="#0f8a18" />
      <path d="M42 59L18 73" stroke="#0a0a9a" strokeWidth="3.500" />
      <path d="M8 78l8-10q4 3 4 9z" fill="#1010c0" />
      <path d="M42 59l24 14" stroke="#a80c0c" strokeWidth="3.500" />
      <path d="M76 78l-12-1q0-6 4-9z" fill="#d01414" />
      <circle cx="42" cy="59" r="5" fill="#2ac4b4" />
      <circle cx="40.500" cy="57.500" r="2" fill="#7aeadc" />
      <text x="42" y="12" fill="#2aae3a">Y</text>
      <text x="1" y="83" fill="#1c1ca0">Z</text>
      <text x="82" y="83" fill="#d03040">X</text>
    </svg>
  );
}

function Viewport() {
  return (
    <div className="relative flex-1 min-h-0 overflow-hidden bg-[linear-gradient(to_bottom,#7188dc_0%,#95a5e6_28%,#c3c9f3_57%,#e2e4fa_75%,#fdfcff_100%)]">
      <div className="absolute right-5 top-[18px] flex flex-col items-end text-white">
        <p className="font-['Lato',sans-serif] text-[21px] leading-[26px] font-black">ANSYS</p>
        <p className="text-[13px] leading-[16px]">2019 <b>R2</b></p>
      </div>
      <Beam />
      <ScaleBar />
      <svg viewBox="0 0 8 13" className="absolute left-1/2 top-[120px] ml-[25px] w-2 h-[13px]">
        <path d="M.500 .500v10L3 8.500 4.500 12l1.500-.700L4.500 8h3z" fill="#fff" stroke="#444" strokeWidth=".6" />
      </svg>
      <Triad />
    </div>
  );
}

/* ---------- annotations ---------- */

const annotationColumns = [
  { name: 'Type', width: 'w-[82px]' },
  { name: 'Value', width: 'w-[83px]' },
  { name: 'Note', width: 'w-[125px]' },
  { name: 'Unit', width: 'w-[42px]' },
  { name: 'Location X', width: 'w-[83px]' },
  { name: 'Location Y', width: 'w-[83px]' },
  { name: 'Location Z', width: 'w-[84px]' },
  { name: 'Association', width: 'w-auto' },
  { name: 'Timestamp', width: 'w-[54px]' },
];

function AnnotationsPanel() {
  return (
    <section className="h-[170px] shrink-0 mt-1 flex flex-col bg-[#f0eef7]">
      <PanelHeader title="Graphics Annotations" maximize={false} dots={false} />
      <div className="flex-1 bg-[#a09ea2]">
        <table className="w-full table-fixed border-collapse text-[10px] leading-[14px] text-[#2a2a32]">
          <thead>
            <tr className="h-[15px] bg-white">
              {annotationColumns.map((col) => (
                <th key={col.name} scope="col" className={`${col.width} p-0 pl-0.5 text-left font-normal whitespace-nowrap border-r border-[#b8b6be] last:border-r-0`}>
                  {col.name}
                </th>
              ))}
            </tr>
          </thead>
        </table>
      </div>
      <div className="h-4 shrink-0 flex text-[10px] leading-[14px]">
        <button type="button" className="w-[105px] text-[#4c4a55]">Selection Information</button>
        <button type="button" className="w-[105px] bg-[#fcfafe] border border-t-0 border-[#d2d0da] text-[#1a7ac4] whitespace-nowrap">Graphics Annotations</button>
      </div>
    </section>
  );
}

/* ---------- status bar and taskbar ---------- */

function StatusBar() {
  return (
    <footer className="h-4 shrink-0 flex items-center pl-0.5 pr-1.5 bg-[#0e7fcb] text-[10px] text-white">
      <span className="flex-1">Ready</span>
      <span>Message Pane</span>
      <span className="ml-3">No Selection</span>
      <span className="ml-5 flex items-center gap-1">
        <svg viewBox="0 0 7 5" className="w-[7px] h-[5px]"><path d="M3.500 0L7 4v1H0V4z" fill="#fff" /></svg>
        Metric (m, kg, N, s, V, A)
      </span>
      <span className="ml-2.5">Degrees</span>
      <span className="ml-2.5">rad/s</span>
      <span className="ml-2">Celsius</span>
    </footer>
  );
}

function Tile({ text, bg, fold }: { text: string; bg: string; fold: string }) {
  return (
    <svg viewBox="0 0 21 21" className="w-[21px] h-[21px] font-['Open_Sans',sans-serif]">
      <rect width="21" height="21" fill={bg} />
      <path d="M7 0h7l7 21H0z" fill={fold} />
      <text x="10.500" y="14.500" textAnchor="middle" fontSize="10" fontWeight="700" fill="#fff">{text}</text>
    </svg>
  );
}

const taskbarApps = [
  { name: 'Start', state: '', icon: (
    <svg viewBox="0 0 14 14" className="w-3.5 h-3.5" fill="#fff"><path d="M0 2l6-.900v5.500H0zM6.700 1L14 0v6.600H6.700zM0 7.300h6v5.500L0 12zM6.700 7.300H14V14l-7.300-1z" /></svg>
  ) },
  { name: 'Task view', state: '', icon: (
    <svg viewBox="0 0 14 14" className="w-3.5 h-3.5" fill="none" stroke="#ddd"><path d="M1 1v2h7V1M1 13v-2h7v2M1 5h7v4H1zM11.500 0v14M10.500 4.500h2v2h-2z" /></svg>
  ) },
  { name: 'Edge', state: '', icon: (
    <svg viewBox="0 0 18 20" className="w-[18px] h-5"><path d="M1 9C2 3 6 0 10 0c5 0 7.500 4 7.500 8v3H6c.300 4 5.500 6 10.500 3v4c-6 3.500-14 1.500-14-6C2.500 8 5 5.500 8 4.500 4 5 2 7 1 9zM6 8h6.500C12.500 4 6.500 4 6 8z" fill="#1380d8" /></svg>
  ) },
  { name: 'Files', state: '', icon: (
    <svg viewBox="0 0 19 17" className="w-[19px] h-[17px]"><path d="M0 1h7l2 2h10v13H0z" fill="#f7dd86" /><path d="M0 1h7l1 2H0z" fill="#e0b848" /><path d="M4 9h11v7h-3v-3H7v3H4z" fill="#4aa8dc" /></svg>
  ) },
  { name: 'Chrome', state: '', icon: (
    <svg viewBox="0 0 20 20" className="w-[18px] h-[18px]">
      <circle cx="10" cy="10" r="10" fill="#f8c81c" />
      <path d="M10 10L1.300 5A10 10 0 0 1 18.700 5z" fill="#e03c2c" />
      <path d="M10 10L1.300 5A10 10 0 0 0 9 20l5-7.500z" fill="#2ca04a" />
      <circle cx="10" cy="10" r="4.800" fill="#fff" />
      <circle cx="10" cy="10" r="3.800" fill="#4a86e8" />
    </svg>
  ) },
  { name: 'Opera', state: '', icon: (
    <svg viewBox="0 0 20 20" className="w-5 h-5"><ellipse cx="10" cy="10" rx="9.500" ry="10" fill="#e01426" /><ellipse cx="10" cy="10" rx="4" ry="7" fill="#05080e" /></svg>
  ) },
  { name: 'License manager', state: 'open', icon: (
    <svg viewBox="0 0 18 18" className="w-[18px] h-[18px]"><rect x="4" y="1" width="13" height="10" fill="#d8e2ea" stroke="#8a98a4" /><path d="M6 8l2-4 2 3 2-4 3 4" fill="none" stroke="#4a80b8" /><path d="M1 6h8v7H1z" fill="#bcc6ce" /><path d="M3 13h9l1 3H4z" fill="#e8e8e8" /></svg>
  ) },
  { name: 'Recorder', state: 'open', icon: (
    <svg viewBox="0 0 21 21" className="w-[21px] h-[21px]"><rect width="21" height="21" rx="2" fill="#e04a48" /><path d="M15 5H8q-2 0-2 2v1.500q0 2 2 2h5q2 0 2 2V14q0 2-2 2H6" fill="none" stroke="#fff" strokeWidth="3" /></svg>
  ) },
  { name: 'Workbench', state: 'open', icon: <Tile text="WB" bg="#b4b4b4" fold="#8c8c8c" /> },
  { name: 'SpaceClaim', state: 'open', icon: <Tile text="SC" bg="#3a3ae0" fold="#0a0ab0" /> },
  { name: 'Mechanical', state: 'active', icon: <Tile text="M" bg="#6a3a7c" fold="#3c1c4c" /> },
];

function Taskbar() {
  return (
    <div className="h-[34px] shrink-0 flex justify-between bg-[#05080f] text-white">
      <div className="w-[454px] flex">
        {taskbarApps.map((app) => (
          <button
            key={app.name}
            type="button"
            aria-label={app.name}
            className={`flex-1 flex flex-col items-center ${app.state === 'active' ? 'bg-[#35363f]' : ''}`}
          >
            <span className="flex-1 flex items-center">{app.icon}</span>
            <span className={`h-0.5 ${app.state === 'active' ? 'w-full bg-[#76b9ed]' : app.state === 'open' ? 'w-[34px] bg-[#76b9ed]' : 'w-0'}`} />
          </button>
        ))}
      </div>
      <div className="flex items-center text-[10px]">
        <svg viewBox="0 0 11 6" className="w-[11px] h-[6px]"><path d="M.5 5.500l5-5 5 5" fill="none" stroke="#ddd" /></svg>
        <svg viewBox="0 0 15 12" className="w-[15px] h-3 ml-2" fill="none" stroke="#ddd"><path d="M3.500 1.500h11v7.500H4M7 11.500h5M.500 1.500h3v2.500h-3zM2 4v7" /></svg>
        <svg viewBox="0 0 14 12" className="w-3.5 h-3 ml-[5px]" fill="none" stroke="#ddd"><path d="M.500 4h2l3-3v10l-3-3h-2zM7.500 4q1 2 0 4M9.500 2.500q2 3.500 0 7M11.500 1q3 5 0 10" /></svg>
        <span className="ml-2 text-[11px]">ENG</span>
        <div className="ml-0.5 w-14 text-center leading-[15px]">
          <p>12:15 PM</p>
          <p>11/12/2019</p>
        </div>
        <svg viewBox="0 0 20 20" className="w-5 h-5 ml-2.5">
          <path d="M0 1h14v10H7l-3 3v-3H0z" fill="#fff" />
          <path d="M2 4h10M2 6.500h10M2 9h6" stroke="#222" />
          <circle cx="13.500" cy="13.500" r="6" fill="#222" stroke="#999" />
          <text x="11" y="17" fontSize="9" fontWeight="700" fill="#fff">3</text>
        </svg>
        <span className="w-px h-[34px] ml-3 mr-0.5 bg-[#50535a]" />
      </div>
    </div>
  );
}

export default function App() {
  return (
    <div className="relative h-screen flex flex-col overflow-hidden bg-[#e9e7f0] font-['Roboto','Noto_Sans',sans-serif]">
      <TitleBar />
      <TabStrip />
      <Ribbon />
      <main className="flex-1 min-h-0 flex gap-1">
        <div className="w-[348px] shrink-0 flex flex-col">
          <OutlinePanel />
          <DetailsPanel />
        </div>
        <div className="flex-1 min-w-0 flex flex-col">
          <GraphicsToolbar />
          <Viewport />
          <AnnotationsPanel />
        </div>
      </main>
      <StatusBar />
      <Taskbar />

      {/* playback pause button */}
      <button type="button" aria-label="Pause" className="absolute right-[13px] bottom-[46px] w-[26px] h-[27px] flex items-center justify-center gap-1 bg-[#5f5d63]/60">
        <span className="w-1 h-3 bg-white/40" />
        <span className="w-1 h-3 bg-white/40" />
      </button>
    </div>
  );
}
